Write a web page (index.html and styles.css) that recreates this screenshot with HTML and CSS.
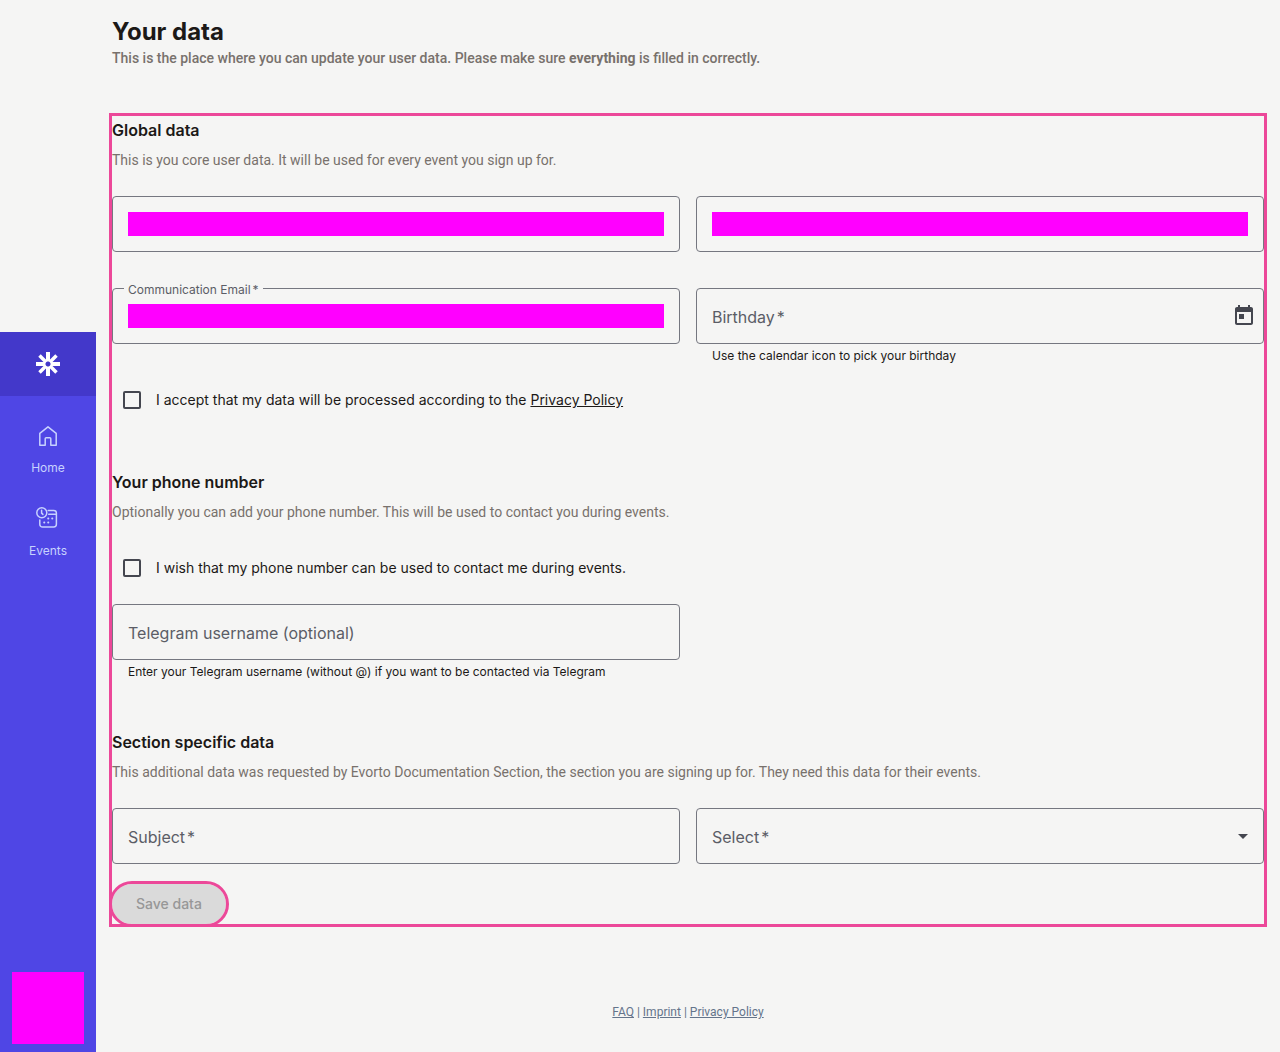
FILE: index.html
```html
<!DOCTYPE html>
<html lang="en">
<head>
  <meta charset="UTF-8" />
  <meta name="viewport" content="width=device-width, initial-scale=1.0"/>
  <title>Your data</title>
  <link rel="stylesheet" href="styles.css">
</head>
<body>
  <nav class="sidebar">
    <a href="#" class="logo" aria-label="Evorto">
      <svg width="24" height="24" viewBox="0 0 24 24" fill="none" stroke="#fff" stroke-width="4">
        <path d="M12 0v9.500M12 14.500V24M0 12h9.500M14.500 12H24"/>
        <path stroke-width="3.500" d="M3.500 3.500l6.700 6.700M13.800 13.800l6.700 6.700M20.500 3.500l-6.700 6.700M10.200 13.800l-6.700 6.700"/>
      </svg>
    </a>
    <a href="#" class="nav-item">
      <svg width="24" height="24" viewBox="0 0 24 24" fill="none" stroke="currentColor" stroke-width="1.5" stroke-linejoin="round">
        <path d="M12 2.800l-8.200 6.600v11.800h5.400v-6.400c0-.6.4-1 1-1h3.600c.6 0 1 .4 1 1v6.400h5.400V9.400z"/>
      </svg>
      <span>Home</span>
    </a>
    <a href="#" class="nav-item">
      <svg width="24" height="24" viewBox="0 1 24 24" fill="none" stroke="currentColor" stroke-width="1.5" stroke-linecap="round">
        <circle cx="5.800" cy="6.800" r="5"/>
        <path d="M5.600 4.200v2.900l1.300 1.300M12.200 4.400h5.500c1.600 0 2.700 1.100 2.700 2.700v11.200c0 1.600-1.100 2.700-2.700 2.700H6.500c-1.600 0-2.700-1.100-2.700-2.700v-4.200M12.700 8.200h7.500"/>
        <path stroke-width="2" d="M12.200 12.400h.1M16.200 12.400h.1M8.200 16.600h.1M12.200 16.600h.1"/>
      </svg>
      <span>Events</span>
    </a>
    <a href="#" class="avatar" aria-label="Profile"></a>
  </nav>

  <main>
    <header>
      <h1>Your data</h1>
      <p>This is the place where you can update your user data. Please make sure <strong>everything</strong> is filled in correctly.</p>
    </header>

    <form>
      <section>
        <h2>Global data</h2>
        <p class="intro">This is you core user data. It will be used for every event you sign up for.</p>
        <div class="fields">
          <div class="field">
            <div class="box"><input type="text" class="filled" aria-label="First name"></div>
          </div>
          <div class="field">
            <div class="box"><input type="text" class="filled" aria-label="Last name"></div>
          </div>
          <div class="field">
            <div class="box">
              <label for="email" class="floating">Communication Email<span class="req">*</span></label>
              <input type="email" id="email" class="filled">
            </div>
          </div>
          <div class="field">
            <div class="box">
              <label for="birthday">Birthday<span class="req">*</span></label>
              <input type="text" id="birthday">
              <button type="button" class="picker" aria-label="Open calendar">
                <svg width="24" height="24" viewBox="0 0 24 24" fill="currentColor">
                  <path d="M19 3h-1V1h-2v2H8V1H6v2H5c-1.100 0-2 .9-2 2v14c0 1.100.9 2 2 2h14c1.100 0 2-.9 2-2V5c0-1.100-.9-2-2-2zm0 16H5V8h14v11zM7 10h5v5H7z"/>
                </svg>
              </button>
            </div>
            <p class="hint">Use the calendar icon to pick your birthday</p>
          </div>
        </div>
        <div class="check">
          <input type="checkbox" id="privacy">
          <label for="privacy">I accept that my data will be processed according to the <a href="#">Privacy Policy</a></label>
        </div>
      </section>

      <section>
        <h2>Your phone number</h2>
        <p class="intro">Optionally you can add your phone number. This will be used to contact you during events.</p>
        <div class="check">
          <input type="checkbox" id="phone">
          <label for="phone">I wish that my phone number can be used to contact me during events.</label>
        </div>
        <div class="fields">
          <div class="field">
            <div class="box">
              <label for="telegram">Telegram username (optional)</label>
              <input type="text" id="telegram">
            </div>
            <p class="hint">Enter your Telegram username (without @) if you want to be contacted via Telegram</p>
          </div>
        </div>
      </section>

      <section>
        <h2>Section specific data</h2>
        <p class="intro">This additional data was requested by Evorto Documentation Section, the section you are signing up for. They need this data for their events.</p>
        <div class="fields">
          <div class="field">
            <div class="box">
              <label for="subject">Subject<span class="req">*</span></label>
              <input type="text" id="subject">
            </div>
          </div>
          <div class="field">
            <div class="box">
              <label for="choice">Select<span class="req">*</span></label>
              <select id="choice"><option value=""></option></select>
              <svg class="arrow" width="10" height="5" viewBox="0 0 10 5" fill="currentColor"><path d="M0 0h10L5 5z"/></svg>
            </div>
          </div>
        </div>
      </section>

      <button type="submit" class="save" disabled>Save data</button>
    </form>

    <footer>
      <a href="#">FAQ</a> | <a href="#">Imprint</a> | <a href="#">Privacy Policy</a>
    </footer>
  </main>
</body>
</html>
```

FILE: styles.css
```css
* {
  box-sizing: border-box;
}
body {
  margin: 0;
  display: flex;
  min-height: 100vh;
  background-color: #f5f5f4;
  color: #1c1917;
  font-family: Inter, "Liberation Sans", sans-serif;
  font-size: 14px;
  line-height: 20px;
}
h1, h2, p {
  margin: 0;
}

/* sidebar */
.sidebar {
  flex: 0 0 96px;
  margin-top: 332px;
  padding-bottom: 8px;
  display: flex;
  flex-direction: column;
  align-items: center;
  background-color: #4f46e5;
}
.logo {
  width: 100%;
  height: 64px;
  margin-bottom: 16px;
  display: flex;
  align-items: center;
  justify-content: center;
  background-color: #4338ca;
}
.nav-item {
  width: 100%;
  padding: 12px 0;
  margin-bottom: 7px;
  display: flex;
  flex-direction: column;
  align-items: center;
  gap: 12px;
  color: #c7d2fe;
  font-size: 12px;
  line-height: 16px;
  text-decoration: none;
}
.avatar {
  width: 72px;
  height: 72px;
  margin-top: auto;
  background-color: #ff00ff;
}

/* page */
main {
  flex: 1;
  min-width: 0;
  padding: 16px;
}
header {
  margin-bottom: 48px;
}
h1 {
  font-size: 24px;
  line-height: 32px;
  font-weight: 700;
}
header p, .intro, footer {
  font-family: Roboto, "Liberation Sans", sans-serif;
}
header p {
  color: #78716c;
  font-weight: 500;
}
header strong {
  font-weight: 700;
}
form {
  outline: 3px solid #ec4899;
}
section + section {
  margin-top: 48px;
}
h2 {
  margin-bottom: 6px;
  font-size: 16px;
  line-height: 28px;
  font-weight: 600;
}
.intro {
  margin-bottom: 26px;
  color: #78716c;
}

/* form fields */
.fields {
  display: grid;
  grid-template-columns: 1fr 1fr;
  gap: 16px;
}
.field {
  min-height: 76px;
}
.box {
  position: relative;
  display: flex;
  align-items: center;
  height: 56px;
  padding: 0 15px;
  border: 1px solid #757780;
  border-radius: 4px;
}
.box label {
  position: absolute;
  left: 15px;
  top: 16px;
  color: #5b5d66;
  font-size: 16px;
  line-height: 24px;
  pointer-events: none;
}
.box label.floating {
  left: 11px;
  top: -7px;
  padding: 0 4px;
  background-color: #f5f5f4;
  font-size: 12px;
  line-height: 16px;
}
.req {
  margin-left: 2px;
}
.box input, .box select {
  flex: 1;
  min-width: 0;
  height: 24px;
  padding: 0;
  border: 0;
  background: none;
  font: inherit;
  font-size: 16px;
  appearance: none;
}
.box .filled {
  background-color: #ff00ff;
}
.picker {
  margin-right: -8px;
  padding: 0;
  border: 0;
  display: flex;
  background: none;
  color: #44464f;
}
.arrow {
  color: #44464f;
}
.hint {
  padding: 4px 16px 0;
  font-size: 12px;
  line-height: 16px;
}
.check {
  display: flex;
  align-items: center;
  gap: 15px;
  height: 40px;
  padding-left: 11px;
}
.check input {
  appearance: none;
  width: 18px;
  height: 18px;
  margin: 0;
  border: 2px solid #44464f;
  border-radius: 2px;
}
.check a {
  color: inherit;
}
.fields + .check, .check + .fields {
  margin-top: 16px;
}
.save {
  display: block;
  height: 40px;
  padding: 0 24px;
  border: 0;
  border-radius: 20px;
  outline: 3px solid #ec4899;
  background-color: #dadada;
  color: #979797;
  font: inherit;
  font-weight: 500;
}

footer {
  margin-top: 80px;
  color: #64748b;
  font-size: 12px;
  line-height: 16px;
  text-align: center;
}
footer a {
  color: inherit;
}
```
